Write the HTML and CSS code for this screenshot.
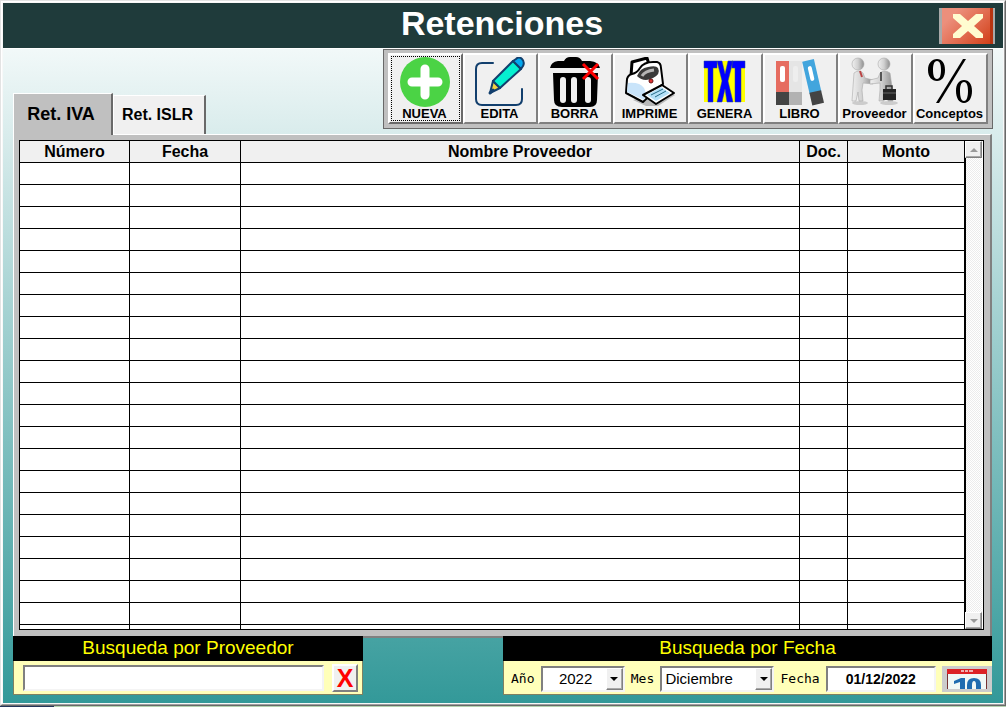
FILE: index.html
```html
<!DOCTYPE html>
<html lang="es">
<head>
<meta charset="utf-8">
<title>Retenciones</title>
<link rel="stylesheet" href="styles.css">
</head>
<body>
<div class="window"><div class="frame"><div class="content">
  <header class="titlebar">
    <h1>Retenciones</h1>
    <button class="close" type="button" aria-label="Cerrar">
      <svg viewBox="0 0 30 24" width="30" height="24"><path d="M0 0h7l8 7 8-7h7v4l-9 8 9 8v4h-7l-8-7-8 7H0v-4l9-8-9-8z" fill="#fffcd0"/></svg>
    </button>
  </header>

  <div class="top">
    <div class="tabs" role="tablist">
      <button class="tab active" type="button" role="tab" aria-selected="true">Ret. IVA</button>
      <button class="tab" type="button" role="tab" aria-selected="false">Ret. ISLR</button>
    </div>
    <div class="toolbar" role="toolbar">
      <button class="tool focused" type="button">
        <svg viewBox="0 0 50 50"><circle cx="25" cy="25" r="25" fill="#4bd345"/><path d="M25 12v26M12 25h26" stroke="#fff" stroke-width="9" stroke-linecap="round"/></svg>
        <span>NUEVA</span>
      </button>
      <button class="tool" type="button">
        <svg viewBox="0 0 50 50" fill="none" stroke="#123f6d" stroke-width="2" stroke-linejoin="round" stroke-linecap="round"><path d="M18 6H7Q1 6 1 12v30q0 6 6 6h34q6 0 6-6V32"/><path d="M15 36l3-12 7 7z" fill="#f5d040"/><path d="M18 24L38 4l8 8-21 19z" fill="#05f0d0"/><path d="M38 4l3-2q3-3 6 0 3 3 1 7l-2 3z" fill="#04a7ee"/><path d="M15 36l3-3" stroke-width="3"/></svg>
        <span>EDITA</span>
      </button>
      <button class="tool" type="button">
        <svg viewBox="0 0 50 50"><path d="M0 11q1-6 8-7h6q2-4 6-4h6q4 0 6 4h8q9 1 10 7z"/><path d="M3 16h45l-1 27q0 7-7 7H12q-8 0-8-7z"/><path d="M13 23v20M24 23v20M38 23v20" stroke="#f0f0f0" stroke-width="6" stroke-linecap="round"/><path d="M33 7l15 15M48 7L33 22" stroke="#f00" stroke-width="3"/></svg>
        <span>BORRA</span>
      </button>
      <button class="tool" type="button">
        <svg viewBox="0 0 50 50" stroke-linejoin="round"><path d="M8 43l13 6h12l17-11-8-4z" fill="#b8b8b8"/><path d="M6 19L7 5l15-4 3 10z" fill="#fff" stroke="#000" stroke-width="3"/><path d="M1 36l1-14q1-4 5-5 5-1 8-6 4-6 13-6h4q4 1 4 6l2 16-18 16-2 2z" fill="#fff" stroke="#000" stroke-width="2"/><path d="M2 35l1-9q12-1 16 5 3 5 0 12z" fill="#c9e4fa"/><path d="M12 19q3-8 11-9 8-2 10 1 3 6-5 10-9 5-16-2z" fill="#3a3a3a"/><path d="M17 19q3-5 12-6" fill="none" stroke="#b5b5b5" stroke-width="3"/><ellipse cx="26" cy="24" rx="2" ry="2" fill="#d33" stroke="#611"/><path d="M18 38l19-10 12 8-18 11z" fill="#fff" stroke="#000" stroke-width="2"/><path d="M22 38l14-8 9 6-14 8z" fill="#b4e0f7"/><path d="M26 38l12-6M30 40l11-6" stroke="#256b86"/></svg>
        <span>IMPRIME</span>
      </button>
      <button class="tool" type="button">
        <svg viewBox="0 0 50 50"><path d="M4 4h41v41H4z" fill="#ff0"/><path d="M4 4h13v7h-4v34H8V11H4zM32 4h13v7h-4v34h-6V11h-3zM17 4h5l3 13 3-13h5l-5 20 5 21h-6l-2-13-3 13h-5l5-21z" fill="#00f" stroke="#2a4a90" stroke-width=".5"/></svg>
        <span>GENERA</span>
      </button>
      <button class="tool" type="button">
        <svg viewBox="0 0 50 50"><path d="M1 4h13v32H1z" fill="#e66c60"/><path d="M1 35h13v13H1z" fill="#444"/><path d="M14 4h13v32H14z" fill="#e5e5e5"/><path d="M14 35h13v13H14z" fill="#b2b2b2"/><rect x="5" y="9" width="5" height="16" rx="2" fill="#fff"/><rect x="18" y="9" width="5" height="16" rx="2" fill="#eee"/><g transform="rotate(-13 37 25)"><path d="M32 3h12v33H32z" fill="#42a5dd"/><path d="M32 35h12v13H32z" fill="#444"/><rect x="36" y="9" width="4" height="15" rx="2" fill="#fff"/></g></svg>
        <span>LIBRO</span>
      </button>
      <button class="tool" type="button">
        <svg viewBox="0 0 50 50"><defs><linearGradient id="body"><stop offset="0" stop-color="#f0f0f0"/><stop offset=".5" stop-color="#d0d0d0"/><stop offset="1" stop-color="#8e8e8e"/></linearGradient></defs><ellipse cx="10" cy="46" rx="8" ry="2" fill="#ccc"/><ellipse cx="39" cy="46" rx="9" ry="2" fill="#ccc"/><g fill="url(#body)" stroke="#aaa" stroke-width=".6"><path d="M4 16q5-4 9 0l2 5 8 2v4l-10-1-1 7 1 11H9l-1-9-2 9H2l1-14z"/><path d="M40 16q-6-4-10 0l-2 5-8 2v4l10-1v7l-1 11h5l2-9 2 9h5l-1-14z"/><circle cx="8" cy="7" r="6"/><circle cx="34" cy="7" r="6"/></g><path d="M10 14l2 6" stroke="#b44" stroke-width="2"/><path d="M31 15v9" stroke="#555" stroke-width="2"/><path d="M33 32h13v11H33z" fill="#242424"/><path d="M36 32v-3h6v3" fill="none" stroke="#333" stroke-width="1.500"/><path d="M33 36h13" stroke="#666"/></svg>
        <span>Proveedor</span>
      </button>
      <button class="tool" type="button">
        <svg viewBox="0 0 50 50"><path d="M38 2h3L14 46h-3z"/><path fill-rule="evenodd" d="M12 2c5 0 8 4 8 11s-3 11-8 11-9-4-9-11S7 2 12 2zm0 2c-3 0-4 4-4 9s1 9 4 9 4-4 4-9-1-9-4-9zM39 23c5 0 8 4 8 11s-3 12-8 12-8-5-8-12 3-11 8-11zm0 2c-3 0-4 4-4 9s1 10 4 10 4-5 4-10-1-9-4-9z"/></svg>
        <span>Conceptos</span>
      </button>
    </div>
  </div>

  <main class="panel">
    <div class="grid">
      <div class="rows">
        <table>
          <colgroup><col class="c-num"><col class="c-date"><col><col class="c-doc"><col class="c-sum"></colgroup>
          <thead><tr><th>Número</th><th>Fecha</th><th>Nombre Proveedor</th><th>Doc.</th><th>Monto</th></tr></thead>
          <tbody>
            <tr><td></td><td></td><td></td><td></td><td></td></tr>
            <tr><td></td><td></td><td></td><td></td><td></td></tr>
            <tr><td></td><td></td><td></td><td></td><td></td></tr>
            <tr><td></td><td></td><td></td><td></td><td></td></tr>
            <tr><td></td><td></td><td></td><td></td><td></td></tr>
            <tr><td></td><td></td><td></td><td></td><td></td></tr>
            <tr><td></td><td></td><td></td><td></td><td></td></tr>
            <tr><td></td><td></td><td></td><td></td><td></td></tr>
            <tr><td></td><td></td><td></td><td></td><td></td></tr>
            <tr><td></td><td></td><td></td><td></td><td></td></tr>
            <tr><td></td><td></td><td></td><td></td><td></td></tr>
            <tr><td></td><td></td><td></td><td></td><td></td></tr>
            <tr><td></td><td></td><td></td><td></td><td></td></tr>
            <tr><td></td><td></td><td></td><td></td><td></td></tr>
            <tr><td></td><td></td><td></td><td></td><td></td></tr>
            <tr><td></td><td></td><td></td><td></td><td></td></tr>
            <tr><td></td><td></td><td></td><td></td><td></td></tr>
            <tr><td></td><td></td><td></td><td></td><td></td></tr>
            <tr><td></td><td></td><td></td><td></td><td></td></tr>
            <tr><td></td><td></td><td></td><td></td><td></td></tr>
            <tr><td></td><td></td><td></td><td></td><td></td></tr>
            <tr><td></td><td></td><td></td><td></td><td></td></tr>
          </tbody>
        </table>
      </div>
      <div class="scrollbar">
        <button type="button" aria-label="Subir"><svg viewBox="0 0 8 4" width="8" height="4"><path d="M0 4l4-4 4 4z" fill="#9a9a9a"/></svg></button>
        <button type="button" aria-label="Bajar"><svg viewBox="0 0 8 4" width="8" height="4"><path d="M0 0l4 4 4-4z" fill="#9a9a9a"/></svg></button>
      </div>
    </div>
  </main>

  <footer class="bottom">
    <section class="search by-name">
      <h2><label for="prov">Busqueda por Proveedor</label></h2>
      <div class="fields">
        <input id="prov" class="field" type="text">
        <button class="clear" type="button">X</button>
      </div>
    </section>
    <section class="search by-date">
      <h2>Busqueda por Fecha</h2>
      <div class="fields">
        <label for="year">Año</label>
        <span class="combo year"><select id="year"><option>2022</option></select><span class="arrow"><svg viewBox="0 0 8 4" width="8" height="4"><path d="M0 0h8L4 4z"/></svg></span></span>
        <label for="month">Mes</label>
        <span class="combo month"><select id="month"><option>Diciembre</option></select><span class="arrow"><svg viewBox="0 0 8 4" width="8" height="4"><path d="M0 0h8L4 4z"/></svg></span></span>
        <label for="date">Fecha</label>
        <input id="date" class="field date" type="text" value="01/12/2022">
        <button class="calendar" type="button" aria-label="Calendario">
          <svg viewBox="0 0 40 20" width="40" height="20"><path d="M0 0h40v20H0z" fill="#733"/><path d="M1 4h38v16H1z" fill="#f0f8f6"/><path d="M0 0h40v5H0z" fill="#dc2226"/><path d="M14 2h3M18 2h3M22 2h4" stroke="#f0b0b0" stroke-width="2"/><path d="M7 12l7-3h4v11h-5v-7l-6 2z" fill="#1f6cb0"/><path fill-rule="evenodd" d="M20 20v-4q0-7 7-7t7 7v4h-5v-4q0-4-2-4t-2 4v4z" fill="#1f6cb0"/></svg>
        </button>
      </div>
    </section>
  </footer>
</div></div></div>
</body>
</html>
```

FILE: styles.css
```css
* { box-sizing: border-box; }

body {
  margin: 0;
  height: 100vh;
  padding-bottom: 1px;
  background: linear-gradient(90deg, #24365a 54px, #b5d3b0 54px);
  font-family: "Liberation Sans", Arial, sans-serif;
  color: #000;
}

button, input, select { font: inherit; color: inherit; margin: 0; padding: 0; border-radius: 0; }
h1, h2 { margin: 0; }
svg { display: block; }

/* Window edges */
.window { height: 100%; border: 1px solid; border-color: #e3e3e3 #696969 #696969 #e3e3e3; }
.frame { height: 100%; border: 1px solid; border-color: #fff #a0a0a0 #a0a0a0 #fff; }
.content {
  height: 100%;
  display: flex;
  flex-direction: column;
  border: 1px solid #f8f8f8;
  background: linear-gradient(#fff, #339999);
}

.titlebar {
  display: grid;
  grid-template-columns: 1fr auto 1fr;
  align-items: center;
  height: 45px;
  flex: none;
  background: #1f3b3b;
  padding: 0 8px 0 6px;
}
.titlebar h1 { grid-column: 2; color: #fff; font-size: 34px; line-height: 40px; padding-bottom: 5px; }
.close {
  justify-self: end;
  width: 56px;
  height: 36px;
  display: grid;
  place-items: center;
  border: solid #a9a9a9;
  border-width: 0 2px 0 3px;
  background: linear-gradient(90deg, transparent 48px, #b83410 48px), linear-gradient(135deg, #ec8f7c 20%, #e0674a 60%, #cf3d14);
}

.top {
  display: flex;
  justify-content: space-between;
  align-items: flex-end;
  flex: none;
  border-top: 1px solid #fff;
  padding: 0 10px;
}
.tabs { display: flex; align-items: flex-end; }
.tab {
  height: 39px;
  width: 93px;
  padding-right: 3px;
  border: solid;
  border-color: #fff #696969 transparent #fff;
  border-width: 1px 2px 0 1px;
  background: #f0f0f0;
  font-size: 16px;
  font-weight: bold;
}
.tab.active {
  position: relative;
  height: 42px;
  width: 100px;
  margin-bottom: -1px;
  background: #c0c0c0;
  font-size: 18px;
}

.toolbar {
  display: flex;
  align-self: flex-start;
  margin-bottom: 5px;
  padding: 3px 4px 4px;
  border: 1px solid #696969;
  background: #c0c0c0;
}
.tool {
  position: relative;
  width: 75px;
  height: 71px;
  padding: 2px 2px 0 0;
  display: flex;
  flex-direction: column;
  align-items: center;
  border: 2px solid;
  border-color: #fff #808080 #808080 #fff;
  background: #f0f0f0;
  font-size: 13px;
  line-height: 13px;
  font-weight: bold;
}
.tool svg { width: 50px; height: 50px; flex: none; }
.tool.focused { border-color: #fff #696969 #696969 #fff; }
.tool.focused::after { content: ""; position: absolute; inset: 1px; border: 1px dotted #000; }

.panel {
  flex: 1;
  min-height: 0;
  display: flex;
  margin: 0 11px 0 10px;
  padding: 5px 6px 6px 5px;
  border: solid;
  border-width: 1px 2px 2px 1px;
  border-color: #fff #808080 #808080 #fff;
  background: #c0c0c0;
}
.grid { flex: 1; min-width: 0; display: flex; border: 1px solid #000; background: #fff; }
.rows { flex: 1; min-width: 0; overflow: hidden; }
table { width: 100%; table-layout: fixed; border-collapse: separate; border-spacing: 0; }
.c-num { width: 110px; }
.c-date { width: 111px; }
.c-doc { width: 48px; }
.c-sum { width: 117px; }
th, td { height: 22px; padding: 0; border: solid #000; border-width: 0 1px 1px 0; }
th { background: #f0f0f0; font-size: 16px; line-height: 21px; }

.scrollbar {
  width: 18px;
  display: flex;
  flex-direction: column;
  justify-content: space-between;
  border-right: 1px solid #fff;
  background: linear-gradient(90deg, #000 1px, transparent 1px), repeating-conic-gradient(#fff 0 25%, #ececec 0 50%) 0 0 / 2px 2px;
}
.scrollbar button, .arrow {
  width: 17px;
  height: 17px;
  display: grid;
  place-items: center;
  border: 1px solid;
  border-color: #fff #808080 #808080 #fff;
  box-shadow: inset -1px -1px #a8a8a8;
  background: #f0f0f0;
}

.bottom {
  display: flex;
  justify-content: space-between;
  flex: none;
  position: relative;
  margin: -2px 11px 8px 10px;
}
.search { height: 59px; }
.by-name { width: 350px; }
.by-date { width: 489px; }
.search h2 {
  height: 25px;
  background: #000;
  color: #ff0;
  font-size: 19px;
  line-height: 24px;
  font-weight: normal;
  text-align: center;
}
.fields {
  display: flex;
  align-items: center;
  height: 34px;
  border: solid #808060;
  border-width: 0 1px 1px;
  background: #ffffb9;
}
.fields label { font: 13px "DejaVu Sans Mono", monospace; }
.field, .combo {
  height: 26px;
  border: 2px solid;
  border-color: #808080 #f4f4f4 #f4f4f4 #808080;
  background: #fff;
}
.by-name .fields { padding: 0 4px 0 9px; justify-content: space-between; }
.by-name .field { width: 301px; }
.clear {
  width: 26px;
  height: 28px;
  border: 2px solid;
  border-color: #fff #808080 #808080 #fff;
  background: #f0f0f0;
  color: #f00;
  font-size: 25px;
  line-height: 24px;
  font-weight: bold;
}
.by-date .fields { padding: 2px 0 0 7px; justify-content: space-between; border-right: 0; }
.combo { position: relative; display: flex; }
.combo select {
  appearance: none;
  width: 100%;
  border: 0;
  background: #fff;
  font-size: 15px;
  padding: 0 20px 0 3px;
}
.year { width: 84px; }
.year select { text-align: center; padding-left: 6px; }
.month { width: 114px; }
.arrow { position: absolute; right: 0; top: 0; height: 100%; pointer-events: none; }
.date { width: 110px; text-align: center; font-size: 14px; font-weight: bold; }
.calendar {
  width: 50px;
  height: 26px;
  border: 0;
  display: grid;
  place-items: end center;
  padding-bottom: 3px;
  background: #ccc;
}
```
